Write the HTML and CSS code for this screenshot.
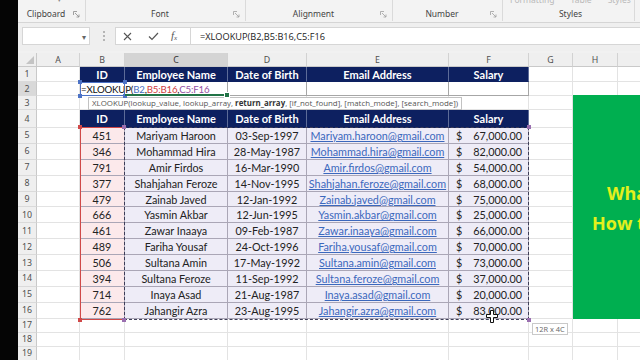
FILE: index.html
```html
<!DOCTYPE html>
<html>
<head>
<meta charset="utf-8">
<link rel="stylesheet" href="styles.css">
</head>
<body>
<div class="frame">
  <div class="blackbar"></div>
  <div class="app">
    <div class="ribbon">
      <div class="grp g-clip">
        <div class="top"><span class="arr">▾</span></div>
        <div class="lblrow"><span class="lbl">Clipboard</span><svg class="launch" width="7" height="7" viewBox="0 0 7 7"><path d="M0.5 4V0.5H4M2 2L6 6M6 3.5V6H3.5" fill="none" stroke="#8a8a8a" stroke-width="0.8"/></svg></div>
      </div>
      <div class="grp g-font">
        <div class="top"></div>
        <div class="lblrow"><span class="lbl">Font</span><svg class="launch" width="7" height="7" viewBox="0 0 7 7"><path d="M0.5 4V0.5H4M2 2L6 6M6 3.5V6H3.5" fill="none" stroke="#a0a0a0" stroke-width="0.8"/></svg></div>
      </div>
      <div class="grp g-align">
        <div class="top"></div>
        <div class="lblrow"><span class="lbl">Alignment</span><svg class="launch" width="7" height="7" viewBox="0 0 7 7"><path d="M0.5 4V0.5H4M2 2L6 6M6 3.5V6H3.5" fill="none" stroke="#a0a0a0" stroke-width="0.8"/></svg></div>
      </div>
      <div class="grp g-num">
        <div class="top"></div>
        <div class="lblrow"><span class="lbl">Number</span><svg class="launch" width="7" height="7" viewBox="0 0 7 7"><path d="M0.5 4V0.5H4M2 2L6 6M6 3.5V6H3.5" fill="none" stroke="#a0a0a0" stroke-width="0.8"/></svg></div>
      </div>
      <div class="grp g-sty">
        <div class="top fade"><span>Formatting</span><span>Table</span><span>Styles</span></div>
        <div class="lblrow"><span class="lbl">Styles</span></div>
      </div>
      <div class="grp g-rest"></div>
    </div>

    <div class="fbar">
      <div class="namebox"><span class="nb-arrow">▾</span></div>
      <div class="dots"><i></i><i></i><i></i></div>
      <div class="fbox">
        <div class="ficons">
          <svg class="ico-x" width="9" height="9" viewBox="0 0 9 9"><path d="M1 1L8 8M8 1L1 8" stroke="#555" stroke-width="1.1"/></svg>
          <svg class="ico-ok" width="11" height="9" viewBox="0 0 11 9"><path d="M1 4.5L4 7.5L10 1" fill="none" stroke="#555" stroke-width="1.2"/></svg>
          <span class="ico-fx">f<sub>x</sub></span>
        </div>
        <div class="ftext">=XLOOKUP(B2,B5:B16,C5:F16</div>
      </div>
    </div>

    <div class="sheetwrap">
      <div class="sheet">
        <!-- column headers -->
        <div class="corner"><span class="tri"></span></div>
        <div class="ch">A</div><div class="ch">B</div><div class="ch sel">C</div><div class="ch">D</div><div class="ch">E</div><div class="ch">F</div><div class="ch">G</div><div class="ch">H</div><div class="ch">I</div>

        <!-- row 1 -->
        <div class="rh">1</div><div class="c"></div>
        <div class="c th">ID</div><div class="c th">Employee Name</div><div class="c th">Date of Birth</div><div class="c th">Email Address</div><div class="c th">Salary</div>
        <div class="c"></div><div class="c"></div><div class="c"></div>

        <!-- row 2 -->
        <div class="rh sel">2</div><div class="c"></div>
        <div class="c r2 fcell">=XLOOKUP(<span class="rb">B2</span>,<span class="rr">B5:B16</span>,<span class="rp">C5:F16</span></div>
        <div class="c r2"></div><div class="c r2"></div><div class="c r2"></div><div class="c r2"></div>
        <div class="c"></div><div class="c"></div><div class="c"></div>

        <!-- row 3 -->
        <div class="rh">3</div><div class="c"></div><div class="c"></div><div class="c"></div><div class="c"></div><div class="c"></div><div class="c"></div><div class="c"></div><div class="c"></div><div class="c"></div>

        <!-- row 4 -->
        <div class="rh">4</div><div class="c"></div>
        <div class="c th">ID</div><div class="c th">Employee Name</div><div class="c th">Date of Birth</div><div class="c th">Email Address</div><div class="c th">Salary</div>
        <div class="c"></div><div class="c"></div><div class="c"></div>

        <!-- data -->
        <div class="rh">5</div><div class="c"></div><div class="c id">451</div><div class="c d">Mariyam Haroon</div><div class="c d">03-Sep-1997</div><div class="c d em"><u>Mariyam.haroon@gmail.com</u></div><div class="c d sal"><span>$</span><span>67,000.00</span></div><div class="c"></div><div class="c"></div><div class="c"></div>
        <div class="rh">6</div><div class="c"></div><div class="c id">346</div><div class="c d">Mohammad Hira</div><div class="c d">28-May-1987</div><div class="c d em"><u>Mohammad.hira@gmail.com</u></div><div class="c d sal"><span>$</span><span>82,000.00</span></div><div class="c"></div><div class="c"></div><div class="c"></div>
        <div class="rh">7</div><div class="c"></div><div class="c id">791</div><div class="c d">Amir Firdos</div><div class="c d">16-Mar-1990</div><div class="c d em"><u>Amir.firdos@gmail.com</u></div><div class="c d sal"><span>$</span><span>54,000.00</span></div><div class="c"></div><div class="c"></div><div class="c"></div>
        <div class="rh">8</div><div class="c"></div><div class="c id">377</div><div class="c d">Shahjahan Feroze</div><div class="c d">14-Nov-1995</div><div class="c d em"><u>Shahjahan.feroze@gmail.com</u></div><div class="c d sal"><span>$</span><span>68,000.00</span></div><div class="c"></div><div class="c"></div><div class="c"></div>
        <div class="rh">9</div><div class="c"></div><div class="c id">479</div><div class="c d">Zainab Javed</div><div class="c d">12-Jan-1992</div><div class="c d em"><u>Zainab.javed@gmail.com</u></div><div class="c d sal"><span>$</span><span>75,000.00</span></div><div class="c"></div><div class="c"></div><div class="c"></div>
        <div class="rh">10</div><div class="c"></div><div class="c id">666</div><div class="c d">Yasmin Akbar</div><div class="c d">12-Jun-1995</div><div class="c d em"><u>Yasmin.akbar@gmail.com</u></div><div class="c d sal"><span>$</span><span>25,000.00</span></div><div class="c"></div><div class="c"></div><div class="c"></div>
        <div class="rh">11</div><div class="c"></div><div class="c id">461</div><div class="c d">Zawar Inaaya</div><div class="c d">09-Feb-1987</div><div class="c d em"><u>Zawar.inaaya@gmail.com</u></div><div class="c d sal"><span>$</span><span>66,000.00</span></div><div class="c"></div><div class="c"></div><div class="c"></div>
        <div class="rh">12</div><div class="c"></div><div class="c id">489</div><div class="c d">Fariha Yousaf</div><div class="c d">24-Oct-1996</div><div class="c d em"><u>Fariha.yousaf@gmail.com</u></div><div class="c d sal"><span>$</span><span>70,000.00</span></div><div class="c"></div><div class="c"></div><div class="c"></div>
        <div class="rh">13</div><div class="c"></div><div class="c id">506</div><div class="c d">Sultana Amin</div><div class="c d">17-May-1992</div><div class="c d em"><u>Sultana.amin@gmail.com</u></div><div class="c d sal"><span>$</span><span>73,000.00</span></div><div class="c"></div><div class="c"></div><div class="c"></div>
        <div class="rh">14</div><div class="c"></div><div class="c id">394</div><div class="c d">Sultana Feroze</div><div class="c d">11-Sep-1992</div><div class="c d em"><u>Sultana.feroze@gmail.com</u></div><div class="c d sal"><span>$</span><span>37,000.00</span></div><div class="c"></div><div class="c"></div><div class="c"></div>
        <div class="rh">15</div><div class="c"></div><div class="c id">714</div><div class="c d">Inaya Asad</div><div class="c d">21-Aug-1987</div><div class="c d em"><u>Inaya.asad@gmail.com</u></div><div class="c d sal"><span>$</span><span>20,000.00</span></div><div class="c"></div><div class="c"></div><div class="c"></div>
        <div class="rh">16</div><div class="c"></div><div class="c id">762</div><div class="c d">Jahangir Azra</div><div class="c d">23-Aug-1995</div><div class="c d em"><u>Jahangir.azra@gmail.com</u></div><div class="c d sal"><span>$</span><span>83,000.00</span></div><div class="c"></div><div class="c"></div><div class="c"></div>

        <div class="rh">17</div><div class="c"></div><div class="c"></div><div class="c"></div><div class="c"></div><div class="c"></div><div class="c"></div><div class="c"></div><div class="c"></div><div class="c"></div>
        <div class="rh">18</div><div class="c"></div><div class="c"></div><div class="c"></div><div class="c"></div><div class="c"></div><div class="c"></div><div class="c"></div><div class="c"></div><div class="c"></div>
        <div class="rh">19</div><div class="c"></div><div class="c"></div><div class="c"></div><div class="c"></div><div class="c"></div><div class="c"></div><div class="c"></div><div class="c"></div><div class="c"></div>
      </div>

      <div class="overlay">
        <div class="ref-b2"><i class="h tl"></i><i class="h tr"></i><i class="h bl"></i><i class="h br"></i></div>
        <div class="active"><i class="fill-h"></i></div>
        <div class="tip">XLOOKUP(lookup_value, lookup_array, <b>return_array</b>, [if_not_found], [match_mode], [search_mode])</div>
        <div class="ref-red"><i class="h tl"></i><i class="h bl"></i></div>
        <div class="marq"><i class="h tl"></i><i class="h tr"></i><i class="h bl"></i><i class="h br"></i></div>
        <div class="cursorcell">
          <svg class="cursor" width="12" height="13" viewBox="0 0 12 13"><path d="M4.5 0.5H7.5V4.5H11.5V7.5H7.5V12.5H4.5V7.5H0.5V4.5H4.5Z" fill="#fff" stroke="#111" stroke-width="1"/></svg>
        </div>
        <div class="sizetip">12R x 4C</div>
        <div class="shape">
          <div class="l1">What is XLOOKUP?</div>
          <div class="l2">How to use it?</div>
        </div>
      </div>
    </div>
  </div>
</div>
</body>
</html>
```

FILE: styles.css
```css
html, body {
  margin: 0;
  padding: 0;
}
body {
  width: 640px;
  height: 360px;
  overflow: hidden;
  background: #000;
  font-family: "Noto Sans", "Open Sans", sans-serif;
}
.frame {
  display: flex;
  height: 360px;
}
.blackbar {
  width: 18px;
  flex: none;
  background: #050505;
}
.app {
  flex: 1;
  min-width: 0;
  display: flex;
  flex-direction: column;
  background: #f1f1f1;
  overflow: hidden;
}

/* ribbon */
.ribbon {
  height: 22px;
  flex: none;
  display: flex;
  background: #f3f3f3;
  border-bottom: 1px solid #d5d5d5;
}
.grp {
  height: 21px;
  box-sizing: border-box;
  display: flex;
  flex-direction: column;
  justify-content: space-between;
  border-right: 1px solid #dadada;
  flex: none;
}
.g-clip { width: 68px; }
.g-font { width: 160px; }
.g-align { width: 147px; }
.g-num { width: 110px; }
.g-sty { width: 132px; }
.g-rest { flex: 1; border-right: none; }
.top {
  height: 5px;
  overflow: hidden;
  display: flex;
}
.top .arr {
  margin-left: 39px;
  margin-top: -6px;
  font-size: 9px;
  line-height: 9px;
  color: #8c8c8c;
}
.fade {
  gap: 16px;
  padding-left: 7px;
}
.fade span {
  margin-top: -5px;
  font-size: 8.5px;
  line-height: 9px;
  color: #b9b9b9;
}
.lblrow {
  display: flex;
  align-items: center;
  height: 12px;
  padding-bottom: 1px;
}
.lbl {
  flex: 1;
  text-align: center;
  font-size: 8.5px;
  color: #444;
  line-height: 12px;
  padding-left: 4px;
}
.launch {
  flex: none;
  margin-right: 5px;
  margin-left: 3px;
}

/* formula bar */
.fbar {
  height: 28px;
  flex: none;
  box-sizing: border-box;
  padding-top: 4px;
  display: flex;
  align-items: flex-start;
  background: #efefef;
}
.namebox {
  width: 68px;
  height: 18px;
  margin-left: 4px;
  box-sizing: border-box;
  background: #fff;
  border: 1px solid #d6d6d6;
  display: flex;
  justify-content: flex-end;
  align-items: center;
}
.nb-arrow {
  font-size: 8px;
  color: #666;
  margin-right: 3px;
}
.dots {
  width: 3px;
  margin-left: 13px;
  margin-right: 9px;
  height: 18px;
  display: flex;
  flex-direction: column;
  justify-content: center;
  gap: 2px;
}
.dots i {
  display: block;
  width: 2px;
  height: 2px;
  background: #b5b5b5;
}
.fbox {
  flex: 1;
  height: 18px;
  box-sizing: border-box;
  background: #fff;
  border: 1px solid #d6d6d6;
  border-right: none;
  display: flex;
  align-items: center;
}
.ficons {
  width: 75px;
  height: 16px;
  box-sizing: border-box;
  border-right: 1px solid #d6d6d6;
  display: flex;
  align-items: center;
  padding-left: 7px;
}
.ico-ok { margin-left: 16px; }
.ico-fx {
  margin-left: 12px;
  font-family: "Liberation Serif", serif;
  font-style: italic;
  font-size: 11px;
  color: #555;
  line-height: 1;
}
.ico-fx sub { font-size: 7px; vertical-align: -1px; }
.ftext {
  padding-left: 9px;
  font-family: "Open Sans", sans-serif;
  font-size: 9.2px;
  color: #222;
  white-space: nowrap;
}

/* sheet */
.sheetwrap {
  margin-top: 2px;
  display: grid;
  background: #fff;
}
.sheet, .overlay {
  grid-area: 1 / 1;
  display: grid;
  grid-template-columns: 19px 43px 45px 103px 79px 142px 80px 44px 45px 64px;
  grid-template-rows: 14px 15px 14px 14px 18px repeat(12, 15.9px) repeat(3, 14px);
}
.sheet {
  background: #fff;
  font-family: "Lato", "Noto Sans", sans-serif;
  font-size: 10.8px;
  color: #222;
}
.overlay {
  pointer-events: none;
}
.corner {
  background: #efefef;
  border-right: 1px solid #c9c9c9;
  border-bottom: 1px solid #c9c9c9;
  position: relative;
}
.tri {
  position: absolute;
  right: 2px;
  bottom: 2px;
  width: 0;
  height: 0;
  border-left: 8px solid transparent;
  border-bottom: 8px solid #c4c4c4;
}
.ch {
  background: #efefef;
  border-right: 1px solid #d2d2d2;
  border-bottom: 1px solid #c9c9c9;
  font-family: "Noto Sans", sans-serif;
  font-size: 8.8px;
  color: #505050;
  display: flex;
  align-items: center;
  justify-content: center;
}
.ch.sel {
  background: #d4d4d4;
  color: #333;
}
.rh {
  background: #efefef;
  border-right: 1px solid #c9c9c9;
  border-bottom: 1px solid #dadada;
  font-family: "Noto Sans", sans-serif;
  font-size: 8.8px;
  color: #505050;
  display: flex;
  align-items: center;
  justify-content: center;
}
.rh.sel {
  background: #d9d9d9;
}
.c {
  border-right: 1px solid #e3e3e3;
  border-bottom: 1px solid #e3e3e3;
  min-width: 0;
  display: flex;
  align-items: center;
  justify-content: center;
  white-space: nowrap;
}
.th {
  background: #0d2060;
  color: #fff;
  font-weight: 700;
  font-size: 11px;
  border-right: 1px solid #5d6c98;
  border-bottom: 1px solid #0d2060;
}
.r2 {
  border-right: 1px solid #a6a6a6;
  border-bottom: 1px solid #a6a6a6;
}
.fcell {
  justify-content: flex-start;
  padding-left: 1px;
  overflow: visible;
  color: #111;
  font-size: 9.7px;
  letter-spacing: -0.2px;
}
.rb { color: #4a6fc0; }
.rr { color: #cf4040; }
.rp { color: #9451a4; }
.id {
  background: #fce9eb;
  border-right: 1px solid #aaa6b6;
  border-bottom: 1px solid #aaa6b6;
}
.d {
  background: #eeecf7;
  border-right: 1px solid #aaa6b6;
  border-bottom: 1px solid #aaa6b6;
}
.em {
  color: #3b68bd;
}
.em u {
  text-decoration-thickness: 1px;
  text-underline-offset: 1px;
}
.sal {
  justify-content: space-between;
  padding: 0 6px 0 7px;
}

/* overlays */
.h {
  position: absolute;
  width: 4px;
  height: 4px;
  display: block;
}
.tl { left: -3px; top: -3px; }
.tr { right: -3px; top: -3px; }
.bl { left: -3px; bottom: -3px; }
.br { right: -3px; bottom: -3px; }

.ref-b2 {
  grid-row: 3;
  grid-column: 3;
  position: relative;
  border: 1px solid #4d73c6;
}
.ref-b2 .h { background: #4d73c6; }
.active {
  grid-row: 3;
  grid-column: 4;
  align-self: end;
  height: 2px;
  background: #217346;
  position: relative;
}
.fill-h {
  position: absolute;
  right: -2px;
  top: -2px;
  width: 4px;
  height: 4px;
  background: #217346;
  border: 1px solid #fff;
  display: block;
}
.tip {
  grid-row: 4;
  grid-column: 3 / 11;
  justify-self: start;
  align-self: center;
  margin-left: 8px;
  height: 13px;
  box-sizing: border-box;
  background: #fff;
  border: 1px solid #c2c2c2;
  padding: 0 3px;
  font-family: "Open Sans", sans-serif;
  font-size: 7.9px;
  line-height: 11px;
  color: #555;
  white-space: nowrap;
}
.tip b { color: #333; }
.ref-red {
  grid-row: 6 / 18;
  grid-column: 3;
  position: relative;
  border: 1px solid #d04848;
  border-right: none;
  margin-top: -1px;
  margin-bottom: -1px;
}
.ref-red .h { background: #d04848; }
.marq {
  grid-row: 6 / 18;
  grid-column: 4 / 8;
  position: relative;
  border: 1.5px dashed #3d3d57;
  margin: -1px 0 -1px -1px;
}
.marq .h { background: #9a6fb0; }
.cursorcell {
  grid-row: 17;
  grid-column: 7;
  position: relative;
}
.cursor {
  position: absolute;
  left: 37px;
  top: 7px;
}
.sizetip {
  grid-row: 18;
  grid-column: 8;
  justify-self: start;
  align-self: start;
  margin-left: 3px;
  margin-top: 4px;
  height: 12px;
  box-sizing: border-box;
  background: #fff;
  border: 1px solid #c9c9c9;
  padding: 0 2px;
  font-family: "Open Sans", sans-serif;
  font-size: 7.4px;
  line-height: 10px;
  color: #666;
  white-space: nowrap;
}
.shape {
  grid-row: 3 / 18;
  grid-column: 9 / 11;
  margin-top: 13px;
  background: #00af50;
  padding-top: 83px;
  font-family: "Open Sans", "Lato", sans-serif;
  font-weight: 700;
  font-size: 18px;
  line-height: 30px;
  color: #e4f01c;
  white-space: nowrap;
  overflow: hidden;
}
.l1 { padding-left: 34px; }
.l2 { padding-left: 19px; }
```
